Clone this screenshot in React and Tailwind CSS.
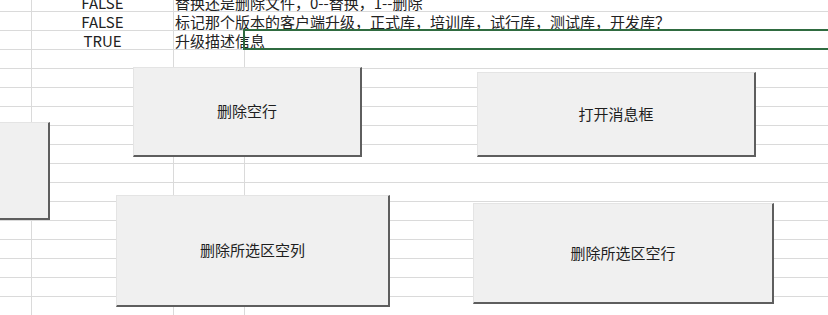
const font = { fontFamily: '"Noto Sans CJK SC", "Noto Sans", sans-serif' };

const rows = [
  { a: "FALSE", text: "替换还是删除文件，0--替换，1--删除" },
  { a: "FALSE", text: "标记那个版本的客户端升级，正式库，培训库，试行库，测试库，开发库？" },
  { a: "TRUE", text: "升级描述信息", selected: true },
];

const buttons = [
  { label: "删除空行", cls: "left-[133px] top-[67px] w-[229px] h-[90px]" },
  { label: "打开消息框", cls: "left-[477px] top-[72px] w-[279px] h-[85px]" },
  { label: "", cls: "left-[-40px] top-[122px] w-[90px] h-[98px]" },
  { label: "删除所选区空列", cls: "left-[116px] top-[195px] w-[274px] h-[112px]" },
  { label: "删除所选区空行", cls: "left-[473px] top-[203px] w-[301px] h-[101px]" },
];

const cell = "h-[19px] border-b border-r border-[#dadada]";

const App = () => {
  const empty = Array.from({ length: 14 });

  return (
    <div className="relative w-[828px] h-[315px] overflow-hidden bg-white text-[15px] text-[#222]" style={font}>
      <div className="-mt-[7px] grid grid-cols-[32px_142px_71px_1fr]">
        {rows.map((r, i) =>
          r.selected ? (
            <div key={i} className="contents">
              <div className={cell} />
              <div className={`${cell} flex items-center justify-center leading-none`}>{r.a}</div>
              <div className={`${cell} relative z-0 flex items-center pl-px leading-none whitespace-nowrap overflow-visible`}>{r.text}</div>
              <div className="relative h-[19px] border-b border-[#dadada]">
                <div className="absolute left-[-2px] top-[-2px] right-[-10px] h-[21px] border-2 border-[#2f6b40] z-10" />
              </div>
            </div>
          ) : (
            <div key={i} className="contents">
              <div className={cell} />
              <div className={`${cell} flex items-center justify-center leading-none`}>{r.a}</div>
              <div className="col-span-2 h-[19px] border-b border-[#dadada] flex items-center pl-px leading-none whitespace-nowrap">
                {r.text}
              </div>
            </div>
          )
        )}
        {empty.map((_, i) => (
          <div key={i} className="contents">
            <div className={cell} />
            <div className={cell} />
            <div className={cell} />
            <div className="h-[19px] border-b border-[#dadada]" />
          </div>
        ))}
      </div>

      {/* floating form buttons */}
      {buttons.map((b, i) => (
        <div
          key={i}
          className={`absolute ${b.cls} z-20 flex items-center justify-center bg-[#f0f0f0] border-t border-l border-[#e4e4e4] border-r-2 border-b-2 border-r-[#5e5e5e] border-b-[#5e5e5e] text-[15px] text-[#1e1e1e]`}
        >
          {b.label}
        </div>
      ))}
    </div>
  );
};

export default App;
